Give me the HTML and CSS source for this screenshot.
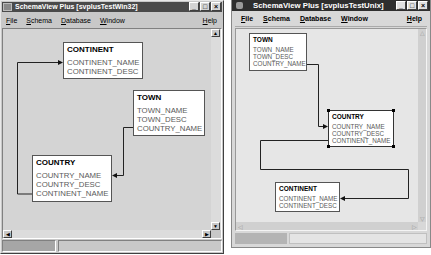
FILE: index.html
```html
<!DOCTYPE html>
<html lang="en">
<head>
    <meta charset="UTF-8">
    <title>SchemaView Plus</title>
    <link rel="stylesheet" href="styles.css">
</head>
<body>

    <!-- Win32 window -->
    <div class="win win32">
        <div class="titlebar">
            <span class="ticon"></span>
            <span class="ttext">SchemaView Plus [svplusTestWin32]</span>
            <span class="tbtns">
                <span class="tbtn">_</span><span class="tbtn">□</span><span class="tbtn">×</span>
            </span>
        </div>
        <div class="menubar">
            <span><u>F</u>ile</span>
            <span><u>S</u>chema</span>
            <span><u>D</u>atabase</span>
            <span><u>W</u>indow</span>
            <span class="help"><u>H</u>elp</span>
        </div>
        <div class="view">
            <div class="canvas">
                <svg class="links" width="209" height="203">
                    <polyline points="29,165 14.5,165 14.5,33.5 57,33.5" />
                    <polygon points="60,33.5 55,31 55,36" />
                    <polyline points="130,98.5 120.5,98.5 120.5,146.5 112,146.5" />
                    <polygon points="109,146.5 114,144 114,149" />
                </svg>
                <div class="table t-continent">
                    <div class="tname">CONTINENT</div>
                    <div>CONTINENT_NAME</div>
                    <div>CONTINENT_DESC</div>
                </div>
                <div class="table t-town">
                    <div class="tname">TOWN</div>
                    <div>TOWN_NAME</div>
                    <div>TOWN_DESC</div>
                    <div>COUNTRY_NAME</div>
                </div>
                <div class="table t-country">
                    <div class="tname">COUNTRY</div>
                    <div>COUNTRY_NAME</div>
                    <div>COUNTRY_DESC</div>
                    <div>CONTINENT_NAME</div>
                </div>
            </div>
            <div class="vscroll">
                <span class="sbtn">▲</span>
                <span class="strack"></span>
                <span class="sbtn">▼</span>
            </div>
            <div class="hscroll">
                <span class="sbtn">◀</span>
                <span class="strack"></span>
                <span class="sbtn">▶</span>
            </div>
            <div class="corner"></div>
        </div>
        <div class="statusbar">
            <span class="progress"></span>
            <span class="pane"></span>
        </div>
    </div>

    <!-- Unix (Motif) window -->
    <div class="win unix">
        <div class="titlebar">
            <span class="ticon"></span>
            <span class="ttext">SchemaView Plus [svplusTestUnix]</span>
            <span class="tbtns">
                <span class="tbtn">_</span><span class="tbtn">□</span><span class="tbtn">×</span>
            </span>
        </div>
        <div class="menubar">
            <span><u>F</u>ile</span>
            <span><u>S</u>chema</span>
            <span><u>D</u>atabase</span>
            <span><u>W</u>indow</span>
            <span class="help"><u>H</u>elp</span>
        </div>
        <div class="view">
            <div class="canvas">
                <svg class="links" width="182" height="196">
                    <polyline points="71,35.5 82.5,35.5 82.5,97.5 89,97.5" />
                    <polygon points="92,97.5 87,95 87,100" />
                    <polyline points="92,111.5 24.5,111.5 24.5,140.5 172.5,140.5 172.5,169.5 107,169.5" />
                    <polygon points="104,169.5 109,167 109,172" />
                </svg>
                <div class="table t-town">
                    <div class="tname">TOWN</div>
                    <div>TOWN_NAME</div>
                    <div>TOWN_DESC</div>
                    <div>COUNTRY_NAME</div>
                </div>
                <div class="table t-country selected">
                    <div class="tname">COUNTRY</div>
                    <div>COUNTRY_NAME</div>
                    <div>COUNTRY_DESC</div>
                    <div>CONTINENT_NAME</div>
                    <span class="handle h-tl"></span>
                    <span class="handle h-tr"></span>
                    <span class="handle h-bl"></span>
                    <span class="handle h-br"></span>
                </div>
                <div class="table t-continent">
                    <div class="tname">CONTINENT</div>
                    <div>CONTINENT_NAME</div>
                    <div>CONTINENT_DESC</div>
                </div>
            </div>
            <div class="vscroll">
                <span class="sbtn">△</span>
                <span class="strack"></span>
                <span class="sbtn">▽</span>
            </div>
            <div class="hscroll">
                <span class="sbtn">◁</span>
                <span class="strack"></span>
                <span class="sbtn">▷</span>
            </div>
            <div class="corner"></div>
        </div>
        <div class="statusbar">
            <span class="progress"></span>
            <span class="pane"></span>
        </div>
    </div>

</body>
</html>
```

FILE: styles.css
```css
body {
    margin: 0;
    padding: 0;
    background: #fff;
    font-family: "Liberation Sans", Arial, sans-serif;
    display: flex;
    gap: 7px;
    align-items: flex-start;
}

/* ---------- common window parts ---------- */

.win {
    box-sizing: border-box;
    display: flex;
    flex-direction: column;
}

.titlebar {
    display: flex;
    align-items: center;
    color: #fff;
    font-weight: bold;
    white-space: nowrap;
}

.tbtns {
    margin-left: auto;
    display: flex;
    gap: 1px;
}

.tbtn {
    width: 8px;
    height: 7px;
    line-height: 7px;
    font-size: 7px;
    text-align: center;
    color: #000;
    background: #d4d4d4;
    border: 1px solid;
    border-color: #fff #404040 #404040 #fff;
}

.menubar {
    display: flex;
    align-items: center;
    color: #000;
    white-space: nowrap;
}

.menubar .help {
    margin-left: auto;
}

.view {
    display: grid;
    grid-template-columns: 1fr auto;
    grid-template-rows: 1fr auto;
}

.canvas {
    position: relative;
    overflow: hidden;
}

.links {
    position: absolute;
    left: 0;
    top: 0;
}

.links polyline {
    fill: none;
    stroke: #222;
    stroke-width: 1;
}

.links polygon {
    fill: #111;
}

.table {
    position: absolute;
    box-sizing: border-box;
    background: #fff;
    border: 1px solid #555;
    color: #5a5a5a;
    white-space: nowrap;
}

.tname {
    color: #000;
    font-weight: bold;
}

.vscroll, .hscroll {
    display: flex;
}

.vscroll {
    flex-direction: column;
}

.strack {
    flex: 1;
}

.sbtn {
    box-sizing: border-box;
    display: flex;
    align-items: center;
    justify-content: center;
    color: #000;
}

.statusbar {
    display: flex;
}

.statusbar .pane {
    flex: 1;
}

/* ---------- Win32 ---------- */

.win32 {
    width: 224px;
    height: 254px;
    padding: 1px;
    background: #c8c8c8;
    border: 1px solid;
    border-color: #e8e8e8 #404040 #404040 #e8e8e8;
}

.win32 .titlebar {
    height: 10px;
    background: #4a4a4a;
    font-size: 7px;
    padding: 0 1px;
}

.win32 .ticon {
    width: 7px;
    height: 6px;
    margin-right: 3px;
    background: #8a8a8a;
    border: 1px solid #bbb;
}

.win32 .menubar {
    height: 16px;
    font-size: 7px;
    gap: 9px;
    padding: 2px 5px 0 4px;
    box-sizing: border-box;
}

.win32 .view {
    height: 212px;
    border: 1px solid;
    border-color: #808080 #fff #fff #808080;
}

.win32 .canvas {
    background: #d4d4d4;
}

.win32 .t-continent { left: 60px; top: 13px; width: 80px; height: 37px; }
.win32 .t-town      { left: 130px; top: 61px; width: 72px; height: 46px; }
.win32 .t-country   { left: 29px; top: 126px; width: 80px; height: 47px; }

.win32 .table {
    padding: 2px 3px;
    font-size: 7.8px;
    line-height: 9.3px;
}

.win32 .tname {
    font-size: 8px;
    line-height: 10px;
    margin-bottom: 3px;
}

.win32 .vscroll {
    width: 10px;
    background: #dcdcdc;
}

.win32 .hscroll {
    height: 8px;
    background: #dcdcdc;
}

.win32 .sbtn {
    width: 9px;
    height: 8px;
    font-size: 5px;
    background: #c8c8c8;
    border: 1px solid;
    border-color: #fff #404040 #404040 #fff;
}

.win32 .corner {
    background: #c8c8c8;
}

.win32 .statusbar {
    height: 12px;
    margin-top: 1px;
    gap: 2px;
}

.win32 .progress {
    width: 52px;
    background: #a6a6a6;
    border: 1px solid;
    border-color: #808080 #fff #fff #808080;
}

.win32 .pane {
    border: 1px solid;
    border-color: #808080 #fff #fff #808080;
}

/* ---------- Unix / Motif ---------- */

.unix {
    width: 200px;
    height: 248px;
    background: #d8d8d8;
    border: 1px solid #888;
    border-top: 0;
    padding: 0 3px 3px 3px;
}

.unix .titlebar {
    height: 11px;
    margin: 0 -3px;
    padding: 0 2px 0 4px;
    background: #2e2e2e;
    font-size: 7.8px;
}

.unix .ticon {
    width: 7px;
    height: 7px;
    margin-right: 10px;
    background: #9a9a9a;
    border-radius: 2px;
}

.unix .tbtn {
    background: #e0e0e0;
}

.unix .menubar {
    height: 16px;
    font-size: 7px;
    font-weight: bold;
    gap: 10px;
    padding: 0 5px 0 6px;
    box-sizing: border-box;
    border-bottom: 1px solid #aaa;
    margin-bottom: 1px;
}

.unix .view {
    height: 205px;
    border: 1px solid;
    border-color: #999 #f4f4f4 #f4f4f4 #999;
}

.unix .canvas {
    background: #e6e6e6;
}

.unix .t-town      { left: 13px; top: 4px; width: 58px; height: 38px; }
.unix .t-country   { left: 92px; top: 81px; width: 66px; height: 37px; border-color: #333; }
.unix .t-continent { left: 39px; top: 153px; width: 65px; height: 30px; }

.unix .table {
    padding: 2px 3px;
    font-size: 6.3px;
    line-height: 7px;
}

.unix .tname {
    font-size: 6.5px;
    line-height: 8px;
    margin-bottom: 2px;
}

.handle {
    position: absolute;
    width: 3px;
    height: 3px;
    background: #000;
}

.h-tl { left: -2px; top: -2px; }
.h-tr { right: -2px; top: -2px; }
.h-bl { left: -2px; bottom: -2px; }
.h-br { right: -2px; bottom: -2px; }

.unix .vscroll {
    width: 8px;
    background: #d0d0d0;
}

.unix .hscroll {
    height: 8px;
    background: #d0d0d0;
}

.unix .sbtn {
    width: 8px;
    height: 8px;
    font-size: 6px;
    color: #999;
}

.unix .corner {
    background: #d8d8d8;
}

.unix .statusbar {
    height: 11px;
    margin-top: 2px;
    gap: 2px;
}

.unix .progress {
    width: 52px;
    background: #b4b4b4;
}

.unix .pane {
    background: #e4e4e4;
    border: 1px solid #c0c0c0;
}
```
